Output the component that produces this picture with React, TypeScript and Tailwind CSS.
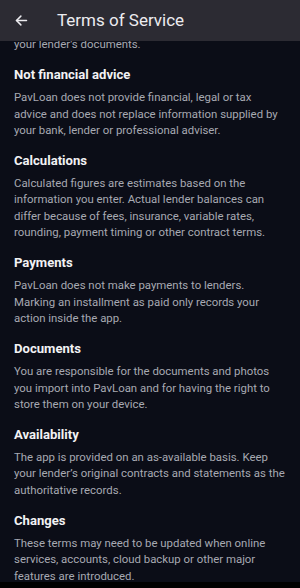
import React from "react";

const sections = [
  {
    title: "Not financial advice",
    body: "PavLoan does not provide financial, legal or tax advice and does not replace information supplied by your bank, lender or professional adviser.",
  },
  {
    title: "Calculations",
    body: "Calculated figures are estimates based on the information you enter. Actual lender balances can differ because of fees, insurance, variable rates, rounding, payment timing or other contract terms.",
  },
  {
    title: "Payments",
    body: "PavLoan does not make payments to lenders. Marking an installment as paid only records your action inside the app.",
  },
  {
    title: "Documents",
    body: "You are responsible for the documents and photos you import into PavLoan and for having the right to store them on your device.",
  },
  {
    title: "Availability",
    body: "The app is provided on an as-available basis. Keep your lender\u2019s original contracts and statements as the authoritative records.",
  },
  {
    title: "Changes",
    body: "These terms may need to be updated when online services, accounts, cloud backup or other major features are introduced.",
  },
];

export default function App() {
  return (
    <div className="flex h-[588px] w-[300px] flex-col overflow-hidden bg-[#0b0d17] font-[Roboto,'Noto_Sans',sans-serif]">
      <header className="relative z-10 flex h-[41px] shrink-0 items-center bg-[#2c2b33]">
        <div className="flex w-[57px] items-center pl-[14px]">
          <svg width="15" height="15" viewBox="0 0 24 24" fill="none" stroke="#ececf0" strokeWidth="2.4" strokeLinecap="round" strokeLinejoin="round">
            <path d="M20 12H4" />
            <path d="M11 5l-7 7 7 7" />
          </svg>
        </div>
        <h1 className="text-[17px] leading-none font-normal text-[#ececf0]">Terms of Service</h1>
      </header>
      <main className="flex-1 overflow-hidden pl-[14px] pr-[14px]">
        <div className="-mt-[5px]">
          <p className="text-[11.4px] leading-[16.3px] text-[#a7a9b2]">your lender's documents.</p>
          {sections.map((s) => (
            <section key={s.title} className="mt-[13px]">
              <h2 className="text-[13.1px] leading-[20px] font-bold text-[#f2f2f4]">{s.title}</h2>
              <p className="mt-[4px] text-[11.4px] leading-[16.3px] text-[#a7a9b2]">{s.body}</p>
            </section>
          ))}
        </div>
      </main>
      <div className="h-[6px] shrink-0 bg-black" />
    </div>
  );
}
